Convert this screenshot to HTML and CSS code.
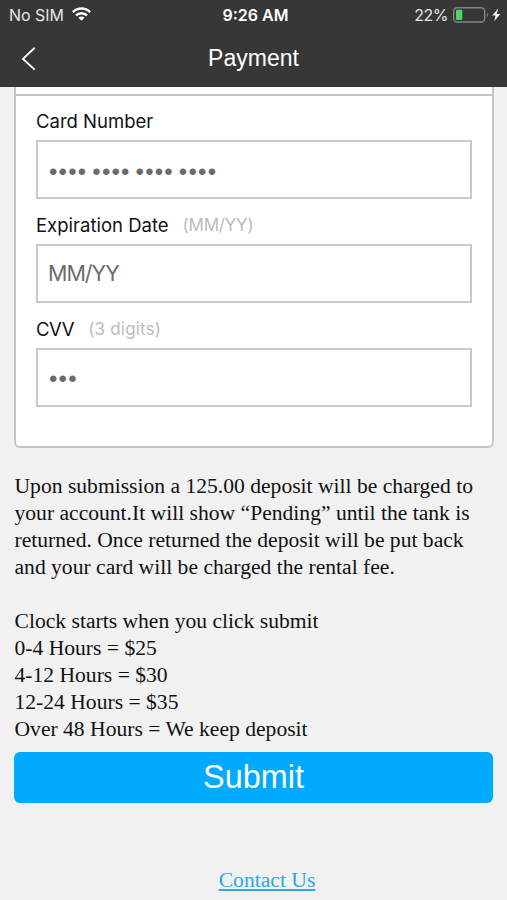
FILE: index.html
```html
<!DOCTYPE html>
<html lang="en">
<head>
<meta charset="utf-8">
<title>Payment</title>
<link rel="stylesheet" href="styles.css">
</head>
<body>
<header class="header">
  <div class="status">
    <div class="carrier"><span class="nosim">No SIM</span>
      <svg class="wifi" width="19" height="14" viewBox="0 0 19 14"><g fill="none" stroke="#fff" stroke-width="2.5"><path d="M.9 5.1a12.2 12.2 0 0 1 17.2 0"/><path d="M4 8.4a7.8 7.8 0 0 1 11 0"/></g><path d="M6.4 10.8a4.4 4.4 0 0 1 6.2 0L9.5 13.8z" fill="#fff"/></svg>
    </div>
    <div class="clock">9:26 AM</div>
    <div class="power"><span class="percent">22%</span>
      <svg width="49" height="16" viewBox="0 0 49 16"><rect x=".7" y=".8" width="31" height="14.2" rx="3.5" fill="none" stroke="#858585" stroke-width="1.4"/><rect x="3" y="2.8" width="6.3" height="10.3" rx="1" fill="#4bd865"/><path d="M33.9 5.7q2.2 2.2 0 4.6z" fill="#858585"/><path d="M45.2 1.5 39.3 8.6h3.4l-1.5 5.6 6-7.3h-3.5z" fill="#fff"/></svg>
    </div>
  </div>
  <nav class="navbar">
    <svg class="back" width="16" height="26" viewBox="0 0 16 26"><path d="M14.7 1.8 3 12.9l11.7 10.7" fill="none" stroke="#fff" stroke-width="1.9"/></svg>
    <h1 class="title">Payment</h1>
  </nav>
</header>
<main class="content">
  <form class="card">
    <div class="fields">
      <label class="field"><span class="label"><span class="name">Card Number</span></span><input class="input dots" placeholder="•••• •••• •••• ••••"></label>
      <label class="field"><span class="label"><span class="name">Expiration Date</span><span class="hint date">(MM/YY)</span></span><input class="input" placeholder="MM/YY"></label>
      <label class="field"><span class="label"><span class="name cvv">CVV</span><span class="hint digits">(3 digits)</span></span><input class="input dots" placeholder="•••"></label>
    </div>
  </form>
  <section class="terms">
    <p>Upon submission a 125.00 deposit will be charged to<br>your account.It will show “Pending” until the tank is<br>returned. Once returned the deposit will be put back<br>and your card will be charged the rental fee.</p>
    <p>Clock starts when you click submit<br>0-4 Hours = $25<br>4-12 Hours = $30<br>12-24 Hours = $35<br>Over 48 Hours = We keep deposit</p>
  </section>
  <button class="submit" type="button">Submit</button>
  <a class="contact" href="#">Contact Us</a>
</main>
</body>
</html>
```
FILE: styles.css
```css
* { box-sizing: border-box; }
body {
  margin: 0;
  height: 900px;
  overflow: hidden;
  background: #f1f1f1;
  color: #111;
  font-family: "Liberation Serif", serif;
}
.header {
  height: 87px;
  background: #373737;
  color: #fff;
}
.status {
  display: grid;
  grid-template-columns: 1fr auto 1fr;
  align-items: center;
  height: 30px;
  padding: 0 5px 0 9px;
  font: 16px/30px Inter, sans-serif;
}
.carrier, .power { display: flex; align-items: center; }
.carrier { gap: 8px; color: #e6e6e6; }
.nosim { letter-spacing: -0.05px; }
.wifi { margin-top: -2px; }
.clock { font-weight: 600; }
.power { justify-content: flex-end; gap: 5px; color: #e6e6e6; }
.percent { letter-spacing: -0.5px; }
.navbar {
  display: grid;
  grid-template-columns: 40px 1fr 40px;
  align-items: center;
  height: 57px;
  padding: 0 20px;
}
.title {
  margin: 0;
  text-align: center;
  font: 23px/56px "Liberation Sans", sans-serif;
  transform: translateY(-1px);
}
.content { padding: 0 14px; }
.card {
  width: 480px;
  height: 361px;
  border: 2px solid #c5c5c5;
  border-top: 0;
  border-radius: 0 0 6px 6px;
  background: #fff;
}
.fields { padding: 0 20px; }
.fields::before {
  content: "";
  display: block;
  height: 7px;
  margin: 0 -20px;
  border-bottom: 2px solid #c5c5c5;
}
.field { display: block; height: 103.8px; }
.label {
  display: flex;
  align-items: center;
  gap: 14px;
  height: 44px;
  padding-top: 6px;
  font: 18.5px/38px Inter, sans-serif;
}
.cvv { letter-spacing: -0.4px; }
.hint { color: #bbb; font-size: 17px; }
.date { letter-spacing: -0.2px; }
.digits { letter-spacing: 0.2px; }
.input {
  display: block;
  width: 436px;
  height: 59px;
  border: 2px solid #c9c9c9;
  border-radius: 0;
  padding: 0 10px;
  background: #fff;
  font: 21.5px Inter, sans-serif;
  letter-spacing: -1px;
}
.input::placeholder { color: #6b6b6b; opacity: 1; }
.dots {
  padding: 4px 11px 0;
  font: 24px "Liberation Sans", sans-serif;
  letter-spacing: 1.2px;
  word-spacing: -3px;
}
.terms {
  margin-top: 25px;
  padding-left: 0.5px;
  font-size: 21.6px;
  line-height: 27px;
}
.terms p { margin: 0 0 27px; white-space: nowrap; }
.terms p:last-child { margin-bottom: 0; }
.submit {
  display: block;
  width: 479px;
  height: 51px;
  margin-top: 9px;
  padding: 0;
  border: 0;
  border-radius: 6px;
  background: #0af;
  color: #fff;
  font: 32.4px/51px "Liberation Sans", sans-serif;
}
.contact {
  display: block;
  width: fit-content;
  margin: 64px auto 0;
  padding-left: 27px;
  color: #2ba9e8;
  font-size: 21.63px;
  line-height: 27px;
}
```
